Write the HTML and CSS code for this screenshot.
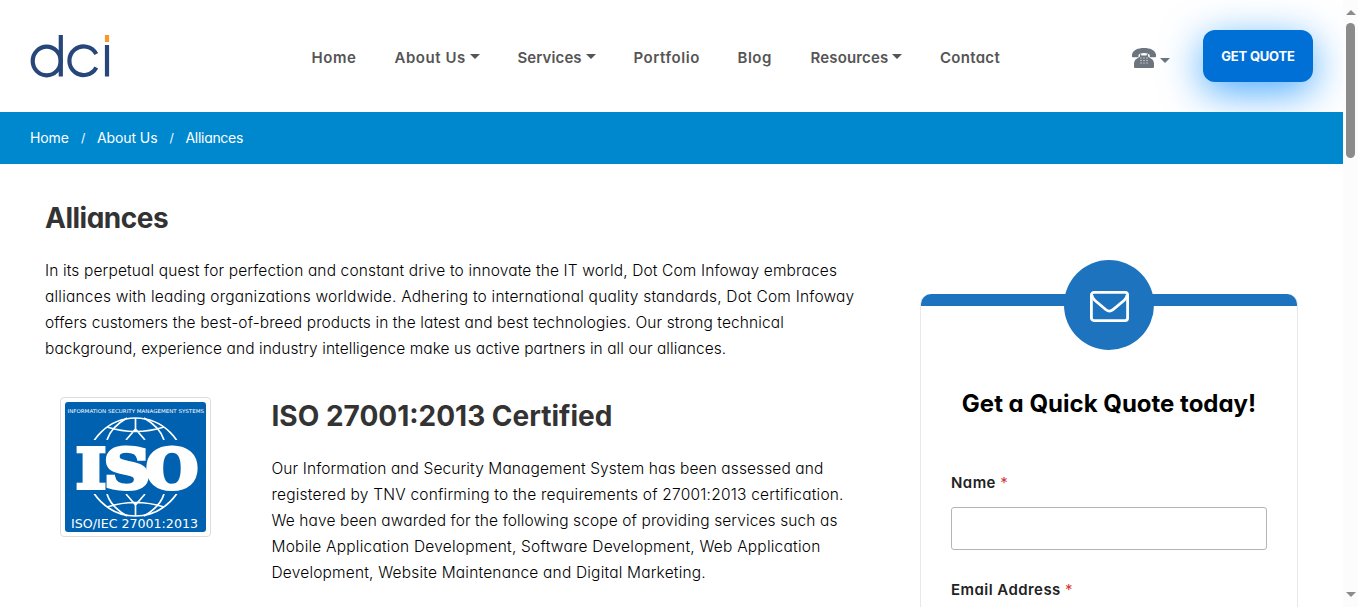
FILE: index.html
```html
<!DOCTYPE html>
<html lang="en">
<head>
<meta charset="utf-8">
<title>Alliances</title>
<link rel="stylesheet" href="styles.css">
</head>
<body>
<div class="page">
  <header class="header">
    <svg class="logo" width="80" height="44" viewBox="0 0 80 44" fill="none" stroke="#27477b" stroke-width="4.200">
      <ellipse cx="16.700" cy="26" rx="14" ry="14.300"/><path d="M30.800 0V41.500"/>
      <path d="M66.300 19A14.300 14.300 0 1 0 66.300 32.500"/><path d="M77 10V41.500"/><path d="M77 0V7" stroke="#f7982a"/>
    </svg>
    <nav class="nav">
      <a class="n1">Home</a><a class="n2">About Us<i class="caret"></i></a><a class="n3">Services<i class="caret"></i></a><a class="n4">Portfolio</a><a class="n5">Blog</a><a class="n6">Resources<i class="caret"></i></a><a class="n7">Contact</a>
    </nav>
    <div class="phone">
      <svg width="24" height="20" viewBox="0 0 24 20" fill="#6c757d"><path d="M0 8.500V6.500C1 2 6 0 12 0S23 2 24 6.500V8.500q0 .7-.7.700H18.500q-.8 0-.8-.8V6.800Q16 5 12 5T6.500 6.800v1.600q0 .8-.8.8H.7Q0 9.200 0 8.500Z"/><path fill-rule="evenodd" d="M8 6.300h1.300V7.500h5.400V6.300H16V8.500l5 3.500 1 3v4q0 1-1 1H3q-1 0-1-1v-4l1-3 5-3.500ZM8.500 9.500h1V10.500h-1Zm3 0h1V10.500h-1Zm3 0h1V10.500h-1ZM8.500 12h1v1h-1Zm3 0h1v1h-1Zm3 0h1v1h-1ZM8.500 14.500h1v1h-1Zm3 0h1v1h-1Zm3 0h1v1h-1Z"/></svg>
      <i class="caret"></i>
    </div>
    <a class="quote"><span>GET QUOTE</span></a>
  </header>
  <div class="crumbs"><a class="c1">Home</a><b>/</b><a class="c2">About Us</a><b>/</b><a class="c3">Alliances</a></div>
  <main class="main">
    <section class="content">
      <h1>Alliances</h1>
      <p class="intro"><span class="a1">In its perpetual quest for perfection and constant drive to innovate the IT world, Dot Com Infoway embraces</span><span class="a2">alliances with leading organizations worldwide. Adhering to international quality standards, Dot Com Infoway</span><span class="a3">offers customers the best-of-breed products in the latest and best technologies. Our strong technical</span><span class="a4">background, experience and industry intelligence make us active partners in all our alliances.</span></p>
      <div class="cert">
        <div class="badge">
          <svg width="141" height="130" viewBox="0 0 141 130">
            <defs><clipPath id="caps"><path d="M0 0H141V38H0ZM0 92H141V130H0Z"/></clipPath></defs>
            <rect width="141" height="130" rx="3" fill="#0061b0"/>
            <g clip-path="url(#caps)" fill="none" stroke="#fff" stroke-width="1.700">
              <circle cx="70.500" cy="65" r="49"/><path d="M70.500 16V29M70.500 114V101M62 16Q46 25 42 38M79 16Q95 25 99 38M70.500 27L61 38M70.500 27L80 38M62 114Q46 105 42 92M79 114Q95 105 99 92M70.500 103L61 92M70.500 103L80 92M42 25Q70.500 34 99 25M42 105Q70.500 96 99 105"/>
            </g>
            <text class="tiny" x="2.500" y="11.300" textLength="136.500" lengthAdjust="spacingAndGlyphs">INFORMATION SECURITY MANAGEMENT SYSTEMS</text>
            <g class="iso"><text x="11" y="86" textLength="30" lengthAdjust="spacingAndGlyphs">I</text><text x="39" y="85.500" textLength="46" lengthAdjust="spacingAndGlyphs">S</text><text x="81" y="85.500" textLength="52" lengthAdjust="spacingAndGlyphs">O</text></g>
            <text class="iec" x="6" y="125.500" textLength="127" lengthAdjust="spacingAndGlyphs">ISO/IEC 27001:2013</text>
          </svg>
        </div>
        <div class="cert-text">
          <h2>ISO 27001:2013 Certified</h2>
          <p><span class="b1">Our Information and Security Management System has been assessed and</span><span class="b2">registered by TNV confirming to the requirements of 27001:2013 certification.</span><span class="b3">We have been awarded for the following scope of providing services such as</span><span class="b4">Mobile Application Development, Software Development, Web Application</span><span class="b5">Development, Website Maintenance and Digital Marketing.</span></p>
        </div>
      </div>
    </section>
    <aside class="form">
      <div class="form-bar"></div>
      <div class="mail"><svg width="39" height="31" viewBox="0 0 39 31" fill="none" stroke="#fff" stroke-width="2.800"><rect x="1.400" y="1.400" width="36.200" height="28.200" rx="2.500"/><path d="M2 4Q2 7 5 9.500L16 18.700Q19.500 21.500 23 18.700L34 9.500Q37 7 37 4"/></svg></div>
      <h3>Get a Quick Quote today!</h3>
      <label class="l1"><span>Name</span> <em>*</em></label>
      <div class="input"></div>
      <label class="l2"><span>Email Address</span> <em>*</em></label>
    </aside>
  </main>
</div>
<div class="scroll"><i class="up"></i><i class="thumb"></i><i class="down"></i></div>
</body>
</html>
```
FILE: styles.css
```css
* { box-sizing: border-box; }
body { margin: 0; height: 607px; overflow: hidden; display: flex; background: #fff; color: #000; font: 15px "Inter", sans-serif; font-feature-settings: "cv11"; }
.page { width: 1343px; height: 607px; overflow: hidden; }
.header { height: 112px; padding: 0 30px; display: flex; }
.logo { margin-top: 35px; flex: none; }
.nav { margin: 47px 0 0 201.5px; display: flex; gap: 38px; height: 22px; line-height: 22px; color: #555; font-weight: 600; width: 688.5px; flex: none; }
.nav a { white-space: nowrap; flex: none; display: flex; justify-content: space-between; }
.n1 { width: 45px; letter-spacing: .6px; } .n2 { width: 85px; letter-spacing: .55px; } .n3 { width: 78px; letter-spacing: .1px; } .n4 { width: 66px; letter-spacing: .55px; } .n5 { width: 35px; letter-spacing: .5px; } .n6 { width: 91.5px; letter-spacing: .15px; } .n7 { width: 60px; letter-spacing: .3px; }
.caret { display: block; width: 0; height: 0; border: 5px solid transparent; border-top-color: currentColor; border-bottom: 0; margin-top: 7px; }
.phone { display: flex; gap: 4px; margin: 48px 0 0 132px; color: #6c757d; width: 39px; height: 21px; }
.phone .caret { margin: 10px 0 0; flex: none; }
.phone svg { flex: none; }
.quote { margin: 30px 0 0 32px; width: 110px; height: 52px; flex: none; border-radius: 12px; background: #0070d7; box-shadow: 0 10px 40px rgba(0,136,255,.72); color: #fff; font-weight: 700; font-size: 13px; line-height: 52px; text-align: center; white-space: nowrap; letter-spacing: -.2px; }
.crumbs { position: relative; height: 52px; line-height: 52px; padding-left: 30px; background: #0088cf; color: #fff; font-size: 14px; display: flex; letter-spacing: -.1px; }
.crumbs b { font-weight: 400; font-size: 12px; width: 28px; text-align: center; }
.c1 { width: 39px; } .c2 { width: 60.5px; } .crumbs a { white-space: nowrap; } .c3 { letter-spacing: -.3px; }
.main { display: flex; padding-left: 45px; }
.content { width: 875px; height: 443px; flex: none; }
h1, h2, h3, p { margin: 0; white-space: nowrap; }
h1, h2 { color: #333; font-size: 28px; font-weight: 700; line-height: 36px; }
h1 { margin-top: 36px; letter-spacing: -.5px; }
p { font-size: 15.5px; font-weight: 350; }
p span { display: block; line-height: 26px; }
.a1 { letter-spacing: .14px; } .a2 { letter-spacing: .2px; } .a3 { letter-spacing: .105px; } .a4 { letter-spacing: .07px; }
.b1 { letter-spacing: .11px; } .b2 { letter-spacing: .21px; } .b3 { letter-spacing: .11px; } .b4 { letter-spacing: .22px; } .b5 { letter-spacing: .19px; }
.intro { margin-top: 22px; }
.cert { display: flex; margin: 35px 0 0 15px; }
.badge { width: 151px; height: 140px; border: 1px solid #ddd; border-radius: 4px; padding: 4px; flex: none; }
.badge svg { display: block; }
.tiny { font: 5.2px "DejaVu Sans", sans-serif; fill: #fff; }
.iec { font: 12px "DejaVu Sans", sans-serif; fill: #fff; }
.iso { font: bold 55px "DejaVu Serif", serif; fill: #fff; stroke: #fff; stroke-width: 4; }
.cert-text { margin-left: 60.5px; }
.cert-text h2 { margin: 1px 0 22px; }
.form { position: relative; width: 378px; height: 313px; margin-top: 130px; border: 1px solid #e8e8e8; border-width: 0 1px; border-radius: 10px 10px 0 0; padding: 0 30px; }
.form-bar { height: 12px; margin: 0 -30px; background: #1e73be; border-radius: 10px 10px 0 0; }
.mail { position: absolute; left: 143px; top: -34px; width: 90px; height: 90px; border-radius: 50%; background: #1e73be; display: grid; place-items: center; }
.mail svg { margin-top: 2px; }
.form h3 { margin-top: 82px; text-align: center; font-size: 24px; line-height: 32px; font-weight: 700; }
label { display: block; color: #222; font-weight: 600; line-height: 22px; white-space: nowrap; letter-spacing: .45px; }
label em { font-style: normal; font-weight: 400; color: #d63637; }
.l1 { margin-top: 52px; }
.input { height: 43px; border: 1px solid #b5b5b5; border-radius: 3px; margin: 13px 0 29px; }
.scroll { width: 15px; background: #fcfcfc; display: flex; flex-direction: column; align-items: center; padding-top: 10px; }
.up, .down { border: 5px solid transparent; }
.up { border-bottom-color: #8b8b8b; border-top: 0; }
.thumb { width: 9px; height: 135px; border-radius: 5px; background: #8b8b8b; margin: 8px 0 434px; }
.down { border-top-color: #8b8b8b; border-bottom: 0; }
```
